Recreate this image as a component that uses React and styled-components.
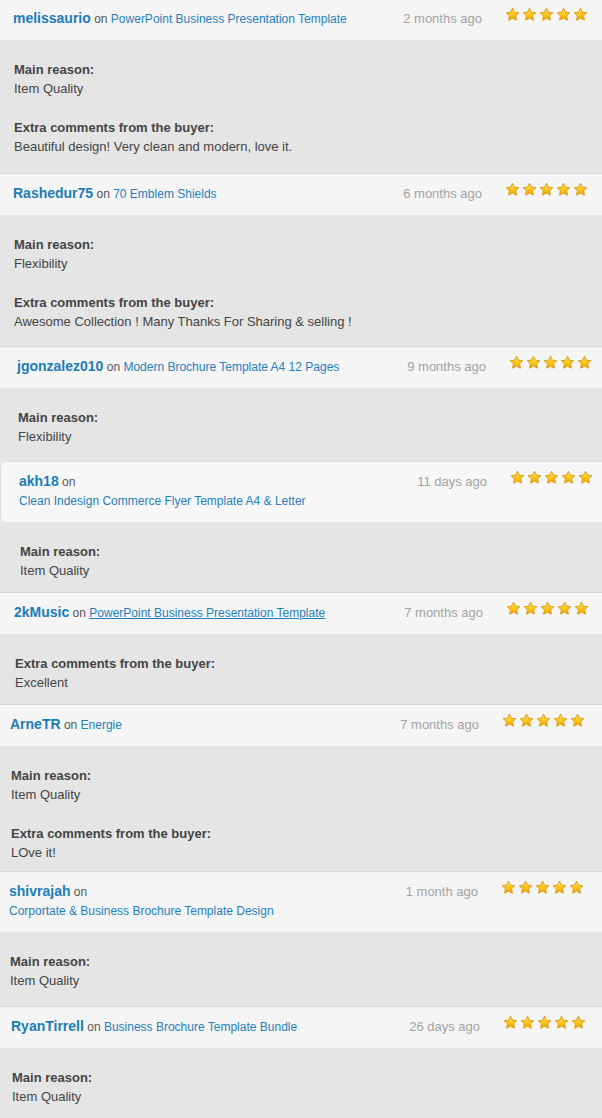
import React from 'react';
import styled, { createGlobalStyle } from 'styled-components';

const GlobalStyle = createGlobalStyle`
  html, body {
    margin: 0;
    padding: 0;
    background: #e5e5e5;
  }

  body {
    font-family: "Liberation Sans", Arial, sans-serif;
    -webkit-font-smoothing: antialiased;
  }
`;

const List = styled.div`
  width: 602px;
  display: flex;
  flex-direction: column;
`;

const Card = styled.div`
  display: flex;
  flex-direction: column;
`;

const Header = styled.div`
  display: flex;
  align-items: flex-start;
  background: #f5f5f5;
  padding: ${({ $first }) => ($first ? 9 : 10)}px ${({ $right }) => $right}px 11px ${({ $left }) => $left}px;
  line-height: 19px;
  border-top: ${({ $first }) => ($first ? '0' : '1px solid #d7d7d7')};

  ${({ $rounded }) => $rounded && `
    background: #f7f7f7;
    border-left: 1px solid #dcdcdc;
    border-top-color: #dcdcdc;
    border-radius: 5px 0 0 5px;
    padding-left: 18px;
  `}
`;

const Who = styled.div`
  flex: 1;
  min-width: 0;
  font-size: 12px;
  color: #555;
`;

const User = styled.a`
  font-size: 14px;
  font-weight: bold;
  color: #1b7db8;
  text-decoration: none;
`;

const ItemLink = styled.a`
  display: ${({ $wrap }) => ($wrap ? 'block' : 'inline')};
  color: #2680bd;
  text-decoration: ${({ $hover }) => ($hover ? 'underline' : 'none')};
`;

const When = styled.span`
  font-size: 13px;
  color: #a3a3a3;
  margin-right: 23px;
  white-space: nowrap;
`;

const Stars = styled.div`
  display: flex;
  gap: 2px;
  margin-top: -2px;
`;

const Body = styled.div`
  display: flex;
  flex-direction: column;
  gap: 20px;
  background: #e5e5e5;
  padding: 20px 0 ${({ $bottom }) => $bottom}px ${({ $left }) => $left}px;
  font-size: 13px;
  line-height: 19px;
  color: #444;
`;

const Block = styled.div`
  display: flex;
  flex-direction: column;
`;

const Label = styled.span`
  font-weight: bold;
  color: #444;
`;

const Star = () => (
  <svg width="15" height="15" viewBox="0 0 24 24">
    <defs>
      <linearGradient id="starFill" x1="0" y1="0" x2="0" y2="1">
        <stop offset="0" stopColor="#ffe66a" />
        <stop offset="0.55" stopColor="#fcc417" />
        <stop offset="1" stopColor="#f2a400" />
      </linearGradient>
    </defs>
    <path
      d="M12 1.8l3.05 6.45 7.05.95-5.15 4.9 1.3 7L12 17.7l-6.25 3.4 1.3-7L1.9 9.2l7.05-.95z"
      fill="url(#starFill)"
      stroke="#d8940a"
      strokeWidth="1.4"
      strokeLinejoin="round"
    />
  </svg>
);

const reviews = [
  {
    user: 'melissaurio',
    item: 'PowerPoint Business Presentation Template',
    when: '2 months ago',
    left: 13,
    right: 14,
    bottom: 17,
    reason: 'Item Quality',
    comment: 'Beautiful design! Very clean and modern, love it.',
  },
  {
    user: 'Rashedur75',
    item: '70 Emblem Shields',
    when: '6 months ago',
    left: 13,
    right: 14,
    bottom: 15,
    reason: 'Flexibility',
    comment: 'Awesome Collection ! Many Thanks For Sharing & selling !',
  },
  {
    user: 'jgonzalez010',
    item: 'Modern Brochure Template A4 12 Pages',
    when: '9 months ago',
    left: 17,
    right: 10,
    bottom: 15,
    reason: 'Flexibility',
  },
  {
    user: 'akh18',
    item: 'Clean Indesign Commerce Flyer Template A4 & Letter',
    when: '11 days ago',
    left: 19,
    right: 9,
    bottom: 12,
    wrap: true,
    rounded: true,
    reason: 'Item Quality',
  },
  {
    user: '2kMusic',
    item: 'PowerPoint Business Presentation Template',
    when: '7 months ago',
    left: 14,
    right: 13,
    bottom: 12,
    hover: true,
    comment: 'Excellent',
  },
  {
    user: 'ArneTR',
    item: 'Energie',
    when: '7 months ago',
    left: 10,
    right: 17,
    bottom: 9,
    reason: 'Item Quality',
    comment: 'LOve it!',
  },
  {
    user: 'shivrajah',
    item: 'Corportate & Business Brochure Template Design',
    when: '1 month ago',
    left: 9,
    right: 18,
    bottom: 16,
    wrap: true,
    reason: 'Item Quality',
  },
  {
    user: 'RyanTirrell',
    item: 'Business Brochure Template Bundle',
    when: '26 days ago',
    left: 11,
    right: 16,
    bottom: 14,
    reason: 'Item Quality',
  },
];

const Review = ({ review, first }) => (
  <Card>
    <Header
      $left={review.left}
      $right={review.right}
      $first={first}
      $rounded={review.rounded}
    >
      <Who>
        <User href="#">{review.user}</User> on{' '}
        <ItemLink href="#" $wrap={review.wrap} $hover={review.hover}>
          {review.item}
        </ItemLink>
      </Who>
      <When>{review.when}</When>
      <Stars>
        {[0, 1, 2, 3, 4].map((i) => (
          <Star key={i} />
        ))}
      </Stars>
    </Header>
    <Body $left={review.left + 1} $bottom={review.bottom}>
      {review.reason && (
        <Block>
          <Label>Main reason:</Label>
          <span>{review.reason}</span>
        </Block>
      )}
      {review.comment && (
        <Block>
          <Label>Extra comments from the buyer:</Label>
          <span>{review.comment}</span>
        </Block>
      )}
    </Body>
  </Card>
);

const App = () => (
  <>
    <GlobalStyle />
    <List>
      {reviews.map((review, i) => (
        <Review key={review.user} review={review} first={i === 0} />
      ))}
    </List>
  </>
);

export default App;
